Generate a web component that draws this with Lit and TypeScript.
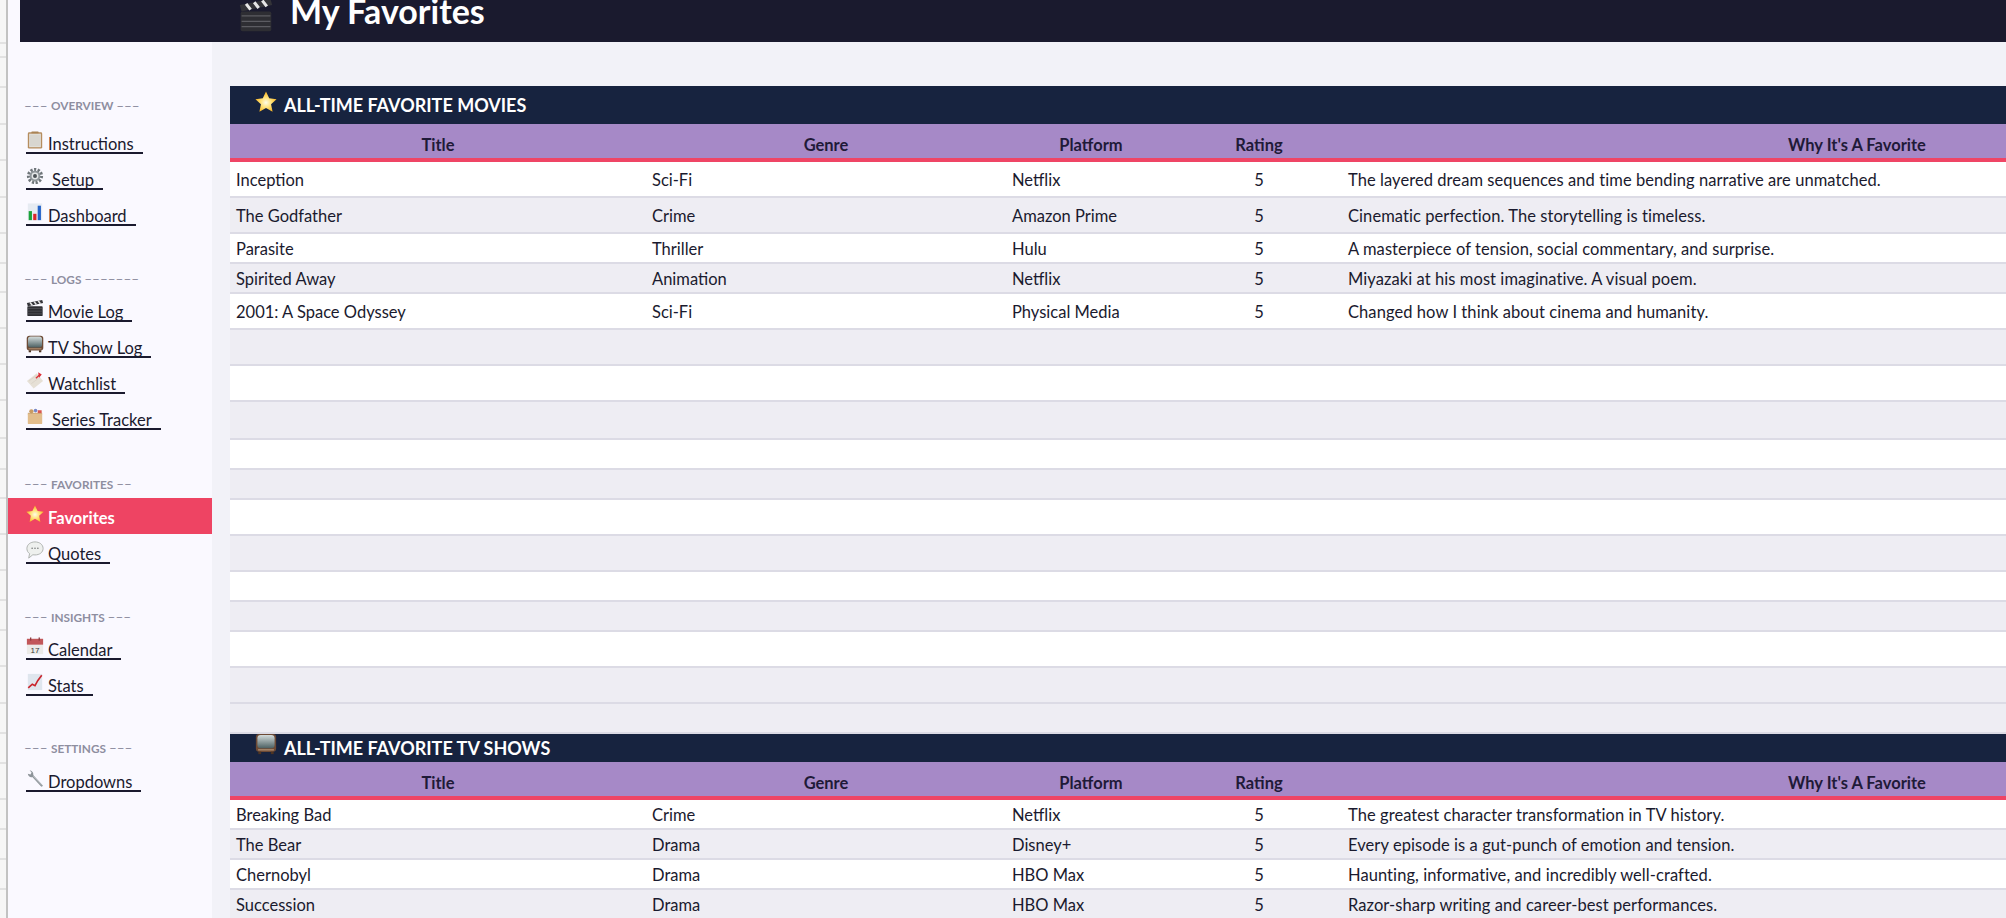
import { LitElement, html, css, type TemplateResult } from 'lit';
import { customElement } from 'lit/decorators.js';
import { classMap } from 'lit/directives/class-map.js';

type Row = { h: number; cells?: string[] };

const ICONS: Record<string, TemplateResult> = {
  clipboard: html`<svg viewBox="0 0 20 20"><rect x="2" y="1.5" width="16" height="18" rx="1.5" fill="#b58d5f"/><rect x="3.5" y="3" width="13" height="15" fill="#e4e2dc"/><rect x="4.5" y="4" width="11" height="13" fill="#d8d6d0"/><rect x="6" y="0.5" width="8" height="2" rx=".6" fill="#a98355"/></svg>`,
  gear: html`<svg viewBox="0 0 20 20"><circle cx="10" cy="10" r="7.2" fill="none" stroke="#6f767a" stroke-width="3.6" stroke-dasharray="2.4 1.6"/><circle cx="10" cy="10" r="6" fill="#8f969a"/><circle cx="10" cy="10" r="3.8" fill="#e4e7e8"/><circle cx="10" cy="10" r="2.2" fill="#4c5256"/></svg>`,
  chart: html`<svg viewBox="0 0 20 20"><rect x="2" y="0.5" width="16" height="19" fill="#e6ebf2"/><rect x="3" y="9" width="3.6" height="10" fill="#1aa33a"/><rect x="8" y="12" width="3.6" height="7" fill="#d9262c"/><rect x="13" y="3" width="3.6" height="16" fill="#2463c9"/></svg>`,
  clapper: html`<svg viewBox="0 0 20 20"><rect x="1.5" y="8" width="17" height="11" rx="1" fill="#2e2e33"/><path d="M2 10.5h16M2 13.5h16M2 16.5h16" stroke="#5c5c62" stroke-width=".7"/><path d="M1 4.5 18 1l1 3.5L2 8z" fill="#333338"/><path d="M4.500 3.800 7 7M9 2.900l2.500 3.200M13.500 2l2.500 3.200" stroke="#e6e6e6" stroke-width="1.700"/></svg>`,
  tv: html`<svg viewBox="0 0 20 20"><defs><linearGradient id="scr" x1="0" y1="0" x2="0" y2="1"><stop offset="0" stop-color="#d3dcdc"/><stop offset="1" stop-color="#4d6163"/></linearGradient></defs><rect x="0.8" y="0.8" width="18.400" height="16.400" rx="3" fill="#6d4a35"/><rect x="2.200" y="1.800" width="15.600" height="12" rx="3" fill="url(#scr)"/><rect x="2.800" y="14.600" width="14.400" height="1.400" fill="#a58467"/><rect x="3" y="17" width="2.600" height="2.200" fill="#4d3423"/><rect x="14.400" y="17" width="2.600" height="2.200" fill="#4d3423"/></svg>`,
  tag: html`<svg viewBox="0 0 20 20"><path d="M1 11 12 2.500l7 8.500L8.500 19.500z" fill="#e6e0d6"/><path d="M3.500 11 12 4.500M6 14l8-6" stroke="#d5cec2" stroke-width=".7"/><path d="M11 8l4-3.500" stroke="#d9333a" stroke-width="1.600"/><path d="M13.500 1.500l4 2.500-3 3.500z" fill="#dd2f38"/></svg>`,
  box: html`<svg viewBox="0 0 20 20"><rect x="2" y="7" width="16" height="12" rx="1" fill="#e2bd8c"/><path d="M2 7h16" stroke="#c9a06d" stroke-width="1"/><circle cx="6" cy="4.800" r="2.400" fill="#c99b62"/><circle cx="10.600" cy="4" r="2" fill="#7787c6"/><rect x="13" y="3.600" width="4.400" height="3.200" fill="#d9574f"/></svg>`,
  star: html`<svg viewBox="0 0 20 20"><defs><radialGradient id="st" cx=".5" cy=".55" r=".55"><stop offset="0" stop-color="#fffde8"/><stop offset=".45" stop-color="#ffe27a"/><stop offset="1" stop-color="#f7ae16"/></radialGradient></defs><path d="M10 .5l2.900 6.200 6.700.8-5 4.500 1.400 6.800L10 15.400l-6 3.400 1.400-6.800-5-4.500 6.700-.8z" fill="url(#st)"/></svg>`,
  bubble: html`<svg viewBox="0 0 20 20"><path d="M10 1c5 0 9 3 9 7.300s-4 7.200-9 7.200c-.8 0-1.600-.1-2.400-.2L3 19l1-5C2 12.700 1 10.700 1 8.300 1 4 5 1 10 1z" fill="#eef0ee" stroke="#a9aeaa" stroke-width="1"/><circle cx="6.800" cy="8" r=".9" fill="#77797a"/><circle cx="10" cy="8" r=".9" fill="#77797a"/><circle cx="13.200" cy="8" r=".9" fill="#77797a"/></svg>`,
  calendar: html`<svg viewBox="0 0 20 20"><rect x="1" y="2" width="18" height="17" fill="#ecebe8"/><rect x="1" y="2" width="18" height="6.500" fill="#c2575a"/><rect x="4.500" y=".5" width="1.400" height="3.500" fill="#8c3b3e"/><rect x="14" y=".5" width="1.400" height="3.500" fill="#8c3b3e"/><text x="10" y="17.300" font-size="9" font-family="Liberation Sans, sans-serif" text-anchor="middle" fill="#3a3a3a">17</text></svg>`,
  trend: html`<svg viewBox="0 0 20 20"><rect x="2" y="1" width="16" height="18" fill="#dfe6ee"/><path d="M2.500 16.500 7 12.500l3 1.500L13 8.500 17.500 2.500" fill="none" stroke="#c9242c" stroke-width="1.800"/></svg>`,
  wrench: html`<svg viewBox="0 0 20 20"><path d="M18.500 18 8 6.800c.6-2.500-.9-5-4-5.500L6.200 4 5 6.200l-3-.9C2.500 8.200 4.800 9.800 7 9L16.800 19.500c.8.600 2.300-.6 1.700-1.500z" fill="#8d9499"/><path d="M8 8l9.800 10.300" stroke="#c6cbce" stroke-width=".8"/></svg>`,
};

const NAV = [
  { h: 45 },
  { h: 37, label: 'OVERVIEW', tail: '–––' },
  { h: 38, link: 'Instructions', icon: 'clipboard' },
  { h: 36, link: 'Setup', icon: 'gear', wide: true },
  { h: 36, link: 'Dashboard', icon: 'chart' },
  { h: 30 },
  { h: 30, label: 'LOGS', tail: '–––––––' },
  { h: 36, link: 'Movie Log', icon: 'clapper' },
  { h: 36, link: 'TV Show Log', icon: 'tv' },
  { h: 36, link: 'Watchlist', icon: 'tag' },
  { h: 36, link: 'Series Tracker', icon: 'box', wide: true },
  { h: 32 },
  { h: 28, label: 'FAVORITES', tail: '––' },
  { h: 36, link: 'Favorites', icon: 'star', active: true },
  { h: 38, link: 'Quotes', icon: 'bubble' },
  { h: 30 },
  { h: 30, label: 'INSIGHTS', tail: '–––' },
  { h: 36, link: 'Calendar', icon: 'calendar' },
  { h: 36, link: 'Stats', icon: 'trend' },
  { h: 30 },
  { h: 28, label: 'SETTINGS', tail: '–––' },
  { h: 38, link: 'Dropdowns', icon: 'wrench' },
];

const MOVIES: Row[] = [
  { h: 36, cells: ['Inception', 'Sci-Fi', 'Netflix', '5', 'The layered dream sequences and time bending narrative are unmatched.'] },
  { h: 36, cells: ['The Godfather', 'Crime', 'Amazon Prime', '5', 'Cinematic perfection. The storytelling is timeless.'] },
  { h: 30, cells: ['Parasite', 'Thriller', 'Hulu', '5', 'A masterpiece of tension, social commentary, and surprise.'] },
  { h: 30, cells: ['Spirited Away', 'Animation', 'Netflix', '5', 'Miyazaki at his most imaginative. A visual poem.'] },
  { h: 36, cells: ['2001: A Space Odyssey', 'Sci-Fi', 'Physical Media', '5', 'Changed how I think about cinema and humanity.'] },
  ...[36, 36, 38, 30, 30, 36, 36, 30, 30, 36, 36, 30].map((h) => ({ h })),
];

const SHOWS: Row[] = [
  { h: 30, cells: ['Breaking Bad', 'Crime', 'Netflix', '5', 'The greatest character transformation in TV history.'] },
  { h: 30, cells: ['The Bear', 'Drama', 'Disney+', '5', 'Every episode is a gut-punch of emotion and tension.'] },
  { h: 30, cells: ['Chernobyl', 'Drama', 'HBO Max', '5', 'Haunting, informative, and incredibly well-crafted.'] },
  { h: 30, cells: ['Succession', 'Drama', 'HBO Max', '5', 'Razor-sharp writing and career-best performances.'] },
];

const COLS = ['Title', 'Genre', 'Platform', 'Rating', "Why It's A Favorite"];

// row numbers strip at the far left, bottoms of its cells
const GUTTER = [44, 14, 30, 37, 36, 37, 36, 30, 29, 36, 36, 36, 38, 31, 29, 36, 36, 30, 30, 36, 37, 30, 30, 36, 30, 30, 30];

@customElement('app-root')
export class AppRoot extends LitElement {
  static styles = css`
    :host {
      display: block;
      width: 100%;
      height: 100vh;
      overflow: hidden;
      font-family: Lato, 'Liberation Sans', sans-serif;
      color: #1a1a2e;
      font-size: 16.5px;
    }
    .page { display: flex; height: 100%; background: #faf9ff; }
    .gutter {
      width: 6px;
      flex: none;
      background: #f6f6f6;
      border-right: 2px solid #c2c2c2;
    }
    .gutter div { box-sizing: border-box; border-bottom: 2px solid #e2e2e2; }
    .main { flex: 1; min-width: 0; display: flex; flex-direction: column; }
    .top {
      box-sizing: border-box;
      height: 42px;
      margin-left: 12px;
      padding: 0 0 13px 218px;
      background: #1a1a2e;
      display: flex;
      align-items: flex-end;
      overflow: hidden;
      flex: none;
    }
    .top svg { width: 36px; height: 36px; margin: 0 16px 0 0; flex: none; position: relative; top: 4px; }
    .top h1 { margin: 0; font-size: 34px; line-height: 36px; font-weight: 700; color: #fff; }
    .body { flex: 1; display: flex; min-height: 0; }
    .side { width: 204px; flex: none; }
    .nav-row { box-sizing: border-box; display: flex; }
    .label {
      align-items: center;
      padding-left: 16px;
      font-size: 11.8px;
      font-weight: 700;
      color: #8e8e9f;
      white-space: pre;
    }
    .dash { font-weight: 400; font-size: 13.5px; }
    .item { align-items: flex-end; padding: 0 0 8px 18px; }
    .item a {
      display: inline-flex;
      align-items: flex-end;
      gap: 4px;
      height: 26px;
      padding-right: 9px;
      border-bottom: 2px solid #1a1a2e;
      color: #1a1a2e;
      line-height: 15px;
      text-decoration: none;
    }
    .item svg { width: 18px; height: 18px; flex: none; margin-bottom: 3px; }
    .item.wide a { gap: 8px; }
    .item.active { background: #ee4463; padding-bottom: 6px; }
    .item.active a { border-bottom-color: transparent; color: #fff; font-weight: 700; }
    .content {
      flex: 1;
      min-width: 0;
      box-sizing: border-box;
      padding: 44px 0 0 18px;
      background: #f2f2f8;
      overflow: hidden;
    }
    .sheet { width: 2142px; }
    .section {
      display: flex;
      align-items: center;
      gap: 7px;
      box-sizing: border-box;
      padding-left: 25px;
      background: #17233f;
      color: #fff;
      font-size: 18px;
      font-weight: 700;
      height: 38px;
    }
    .section.short { height: 28px; }
    .section svg { width: 22px; height: 22px; flex: none; position: relative; top: -3px; }
    .section.short svg { top: -4px; }
    .grid { display: grid; grid-template-columns: 416px 360px 170px 166px 1030px; }
    .head {
      box-sizing: border-box;
      height: 38px;
      padding-top: 7px;
      background: #a689c7;
      border-bottom: 4px solid #ef4565;
      font-weight: 700;
      color: #1f1a38;
      align-items: center;
    }
    .head span { text-align: center; }
    .row {
      box-sizing: border-box;
      padding-top: 2px;
      background: #fff;
      border-bottom: 2px solid #dcdbe5;
      align-items: center;
    }
    .row.alt { background: #eeedf3; }
    .row span { padding-left: 6px; white-space: nowrap; }
    .row span.mid { padding-left: 0; text-align: center; }
    .row span:last-child { letter-spacing: 0.07px; }
  `;

  private renderNav() {
    return NAV.map((n) => {
      if (n.label) {
        return html`<div class="nav-row label" style="height:${n.h}px"><span class="dash">––– </span>${n.label} <span class="dash">${n.tail}</span></div>`;
      }
      if (!n.link) return html`<div class="nav-row" style="height:${n.h}px"></div>`;
      const cls = { 'nav-row': true, item: true, wide: !!n.wide, active: !!n.active };
      return html`<div class=${classMap(cls)} style="height:${n.h}px">
        <a>${ICONS[n.icon!]}<span>${n.link}</span></a>
      </div>`;
    });
  }

  private renderTable(rows: Row[]) {
    return html`
      <div class="grid head">${COLS.map((c) => html`<span>${c}</span>`)}</div>
      ${rows.map((r, i) => {
        const cls = { grid: true, row: true, alt: i % 2 === 1 || i === 16 };
        return html`<div class=${classMap(cls)} style="height:${r.h}px">
          ${(r.cells ?? []).map((c, j) => html`<span class=${j === 3 ? 'mid' : ''}>${c}</span>`)}
        </div>`;
      })}
    `;
  }

  render() {
    return html`<div class="page">
      <div class="gutter">${GUTTER.map((h) => html`<div style="height:${h}px"></div>`)}</div>
      <div class="main">
        <div class="top">${ICONS.clapper}<h1>My Favorites</h1></div>
        <div class="body">
          <nav class="side">${this.renderNav()}</nav>
          <div class="content">
            <div class="sheet">
              <div class="section">${ICONS.star}<span>ALL-TIME FAVORITE MOVIES</span></div>
              ${this.renderTable(MOVIES)}
              <div class="section short">${ICONS.tv}<span>ALL-TIME FAVORITE TV SHOWS</span></div>
              ${this.renderTable(SHOWS)}
            </div>
          </div>
        </div>
      </div>
    </div>`;
  }
}
